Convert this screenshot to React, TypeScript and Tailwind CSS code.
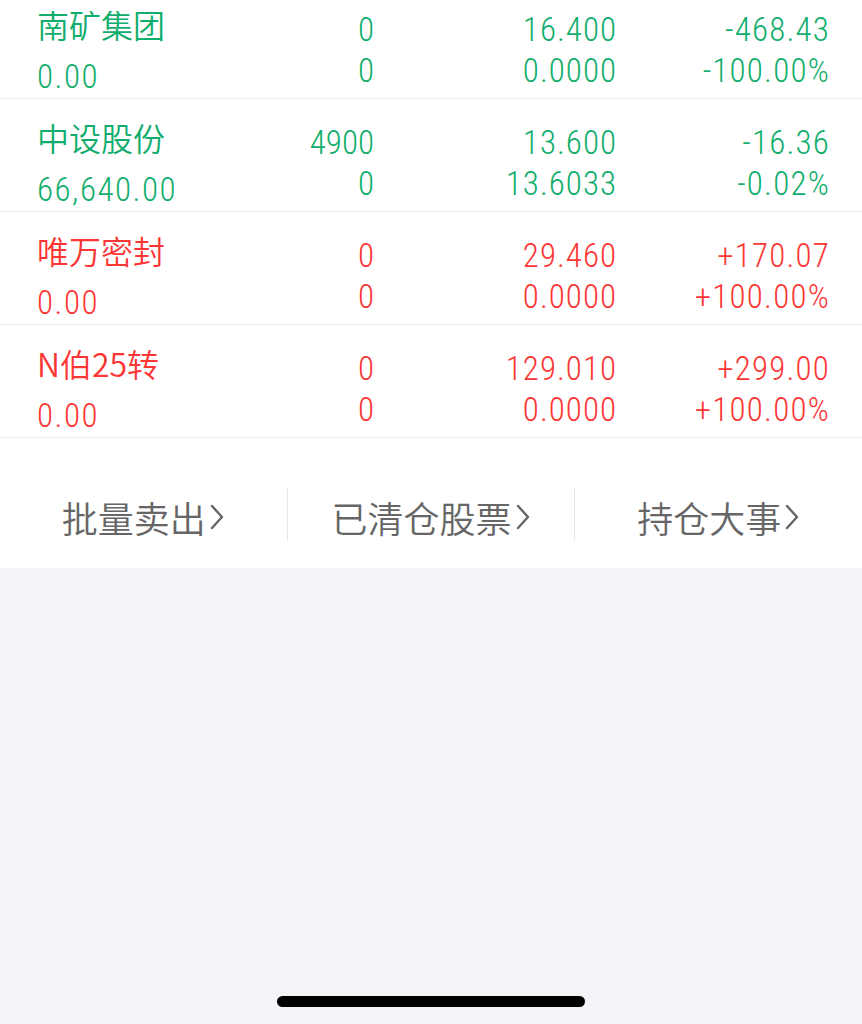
import React from "react";

type Row = {
  name: string;
  value: string;
  qty: string;
  avail: string;
  price: string;
  cost: string;
  pl: string;
  pct: string;
  up: boolean;
};

const rows: Row[] = [
  { name: "南矿集团", value: "0.00", qty: "0", avail: "0", price: "16.400", cost: "0.0000", pl: "-468.43", pct: "-100.00%", up: false },
  { name: "中设股份", value: "66,640.00", qty: "4900", avail: "0", price: "13.600", cost: "13.6033", pl: "-16.36", pct: "-0.02%", up: false },
  { name: "唯万密封", value: "0.00", qty: "0", avail: "0", price: "29.460", cost: "0.0000", pl: "+170.07", pct: "+100.00%", up: true },
  { name: "N伯25转", value: "0.00", qty: "0", avail: "0", price: "129.010", cost: "0.0000", pl: "+299.00", pct: "+100.00%", up: true },
];

const num = "font-['Liberation_Sans_Narrow','Roboto_Condensed',Roboto,sans-serif] font-light";
const cjk = "font-['Noto_Sans_CJK_SC','Noto_Sans',sans-serif]";

function Chevron() {
  return (
    <svg width="16" height="26" viewBox="0 0 16 26" className="ml-[3px]">
      <path d="M3 2 L13 13 L3 24" fill="none" stroke="#666666" strokeWidth="2.4" strokeLinecap="round" strokeLinejoin="round" />
    </svg>
  );
}

function HoldingRow({ r }: { r: Row }) {
  const color = r.up ? "text-[#fc3535]" : "text-[#10ad6c]";
  return (
    <div className={`flex h-[113px] border-b border-[#ececf1] pl-[37px] pr-[32px] ${color}`}>
      <div className="w-[200px] flex flex-col pt-[17px]">
        <span className={`${cjk} font-[350] text-[32px] leading-[42px] whitespace-nowrap`}>{r.name}</span>
        <span className={`${num} text-[33px] leading-[42px] mt-[11px] tracking-[1.5px]`}>{r.value}</span>
      </div>
      <div className={`w-[137px] flex flex-col pt-[23px] text-right ${num} text-[33px] leading-[41px]`}>
        <span>{r.qty}</span>
        <span>{r.avail}</span>
      </div>
      <div className={`w-[243px] flex flex-col pt-[23px] text-right ${num} text-[33px] leading-[41px] tracking-[1px]`}>
        <span>{r.price}</span>
        <span>{r.cost}</span>
      </div>
      <div className={`flex-1 flex flex-col pt-[23px] text-right ${num} text-[33px] leading-[41px] tracking-[1.2px]`}>
        <span>{r.pl}</span>
        <span>{r.pct}</span>
      </div>
    </div>
  );
}

export default function App() {
  const actions = ["批量卖出", "已清仓股票", "持仓大事"];
  return (
    <div className="w-[862px] h-[1024px] bg-[#f3f4f8] flex flex-col overflow-hidden">
      <div className="bg-white -mt-[14px]">
        {rows.map((r) => (
          <HoldingRow key={r.name} r={r} />
        ))}
        <div className="flex items-center pt-[50px] pb-[27px]">
          {actions.map((a, i) => (
            <React.Fragment key={a}>
              {i > 0 && <div className="w-px h-[53px] bg-[#e6e6ec]" />}
              <div className={`flex-1 flex items-center justify-center pt-[5px] ${cjk} font-[350] text-[36px] leading-[48px] text-[#666666]`}>
                <span>{a}</span>
                <Chevron />
              </div>
            </React.Fragment>
          ))}
        </div>
      </div>
      <div className="flex-1" />
      <div className="flex justify-center pb-[17px]">
        <div className="w-[308px] h-[11px] rounded-full bg-black" />
      </div>
    </div>
  );
}
